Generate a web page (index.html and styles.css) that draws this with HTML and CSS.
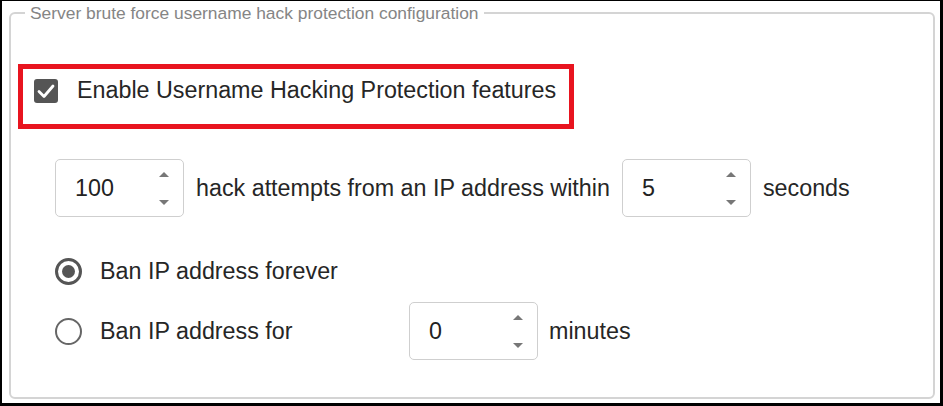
FILE: index.html
```html
<!DOCTYPE html>
<html>
<head>
<meta charset="utf-8">
<link rel="stylesheet" href="styles.css">
</head>
<body>
<div class="frame">
  <fieldset class="group">
    <legend class="group-title">Server brute force username hack protection configuration</legend>
    <div class="highlight">
      <label class="check-row">
        <span class="checkbox">
          <svg width="24" height="24" viewBox="0 0 24 24"><path d="M5 12.5 L10 17.5 L19 7" fill="none" stroke="#fff" stroke-width="2.8" stroke-linecap="round" stroke-linejoin="round"/></svg>
        </span>
        <span class="label-text">Enable Username Hacking Protection features</span>
      </label>
    </div>
    <div class="attempts-row">
      <div class="spinner"><span class="spin-value">100</span><span class="spin-arrows"><span class="arrow-up"></span><span class="arrow-down"></span></span></div>
      <span class="label-text">hack attempts from an IP address within</span>
      <div class="spinner"><span class="spin-value">5</span><span class="spin-arrows"><span class="arrow-up"></span><span class="arrow-down"></span></span></div>
      <span class="label-text">seconds</span>
    </div>
    <div class="radio-row first">
      <span class="radio checked"><span class="dot"></span></span>
      <span class="label-text">Ban IP address forever</span>
    </div>
    <div class="radio-row second">
      <span class="radio"></span>
      <span class="label-text fixed">Ban IP address for</span>
      <div class="spinner"><span class="spin-value">0</span><span class="spin-arrows"><span class="arrow-up"></span><span class="arrow-down"></span></span></div>
      <span class="label-text after">minutes</span>
    </div>
  </fieldset>
</div>
</body>
</html>
```
FILE: styles.css
```css
* { box-sizing: border-box; }
html, body {
  margin: 0;
  padding: 0;
  background: #fff;
  font-family: "Liberation Sans", Arial, sans-serif;
}
.frame {
  width: 943px;
  height: 406px;
  border-style: solid;
  border-color: #000;
  border-width: 1px 3px 3px 2px;
  display: flex;
  flex-direction: column;
  overflow: hidden;
}
.group {
  flex: 1;
  margin: 2px 5px 4px 7px;
  padding: 0;
  border: 2px solid #d4d4d4;
  border-radius: 6px;
  min-width: 0;
}
.group-title {
  margin-left: 14px;
  padding: 0 5px;
  font-size: 17.4px;
  line-height: 20px;
  color: #858585;
}
.highlight {
  width: 556px;
  height: 65px;
  margin: 41px 0 0 7px;
  border: 5px solid #e8141f;
  padding: 8px 0 0 11px;
}
.check-row {
  display: flex;
  align-items: center;
  gap: 19px;
}
.checkbox {
  width: 24px;
  height: 24px;
  border-radius: 3px;
  background: #555;
  display: block;
}
.checkbox svg { display: block; }
.label-text {
  font-size: 23.3px;
  color: #262626;
  white-space: nowrap;
}
.attempts-row {
  display: flex;
  align-items: center;
  margin: 30px 0 0 44px;
  gap: 12px;
}
.spinner {
  width: 129px;
  height: 58px;
  border: 1.5px solid #cfcfcf;
  border-radius: 5px;
  display: flex;
  align-items: center;
  justify-content: space-between;
  padding: 0 14px 0 19px;
  flex: none;
}
.spin-value {
  font-size: 23.3px;
  color: #222;
}
.spin-arrows {
  display: flex;
  flex-direction: column;
  justify-content: space-between;
  height: 33px;
}
.arrow-up, .arrow-down {
  width: 0;
  height: 0;
  border-left: 5px solid transparent;
  border-right: 5px solid transparent;
}
.arrow-up { border-bottom: 5px solid #777; }
.arrow-down { border-top: 5px solid #777; }
.radio-row {
  display: flex;
  align-items: center;
  margin-left: 44px;
  gap: 18px;
}
.radio-row.first { margin-top: 41px; height: 26px; }
.radio-row.second { margin-top: 18px; }
.radio {
  width: 27px;
  height: 27px;
  border-radius: 50%;
  border: 2.5px solid #666;
  display: flex;
  align-items: center;
  justify-content: center;
  flex: none;
}
.radio.checked { border-color: #555; border-width: 3px; }
.dot {
  width: 13px;
  height: 13px;
  border-radius: 50%;
  background: #555;
}
.label-text.fixed { width: 291px; }
.label-text.after { margin-left: -7px; }
```
